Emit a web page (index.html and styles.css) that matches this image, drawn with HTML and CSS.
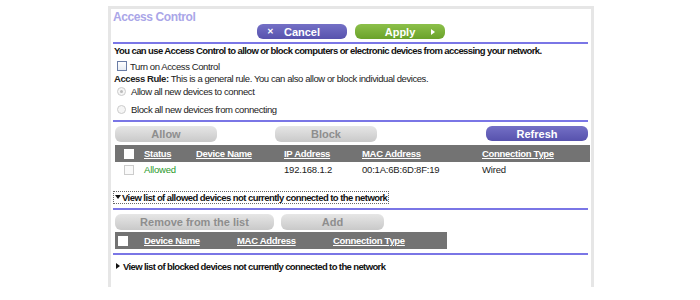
FILE: index.html
```html
<!DOCTYPE html>
<html lang="en">
<head>
  <meta charset="UTF-8" />
  <title>Access Control</title>
  <link rel="stylesheet" href="styles.css">
</head>
<body>
  <div class="frame">
    <div class="title">Access Control</div>
    <div class="top-buttons">
      <button class="btn btn-purple btn-top"><span class="x">&#x2715;</span>Cancel</button>
      <button class="btn btn-green btn-top">Apply<span class="tri"></span></button>
    </div>
    <div class="rule"></div>

    <p class="intro">You can use Access Control to allow or block computers or electronic devices from accessing your network.</p>
    <label class="line check-line"><span class="box"></span>Turn on Access Control</label>
    <p class="rule-text"><b>Access Rule:</b> This is a general rule. You can also allow or block individual devices.</p>
    <label class="line radio-line"><span class="radio checked"></span>Allow all new devices to connect</label>
    <label class="line radio-line second"><span class="radio"></span>Block all new devices from connecting</label>

    <div class="rule rule-mid"></div>

    <div class="btn-row">
      <button class="btn btn-gray w102">Allow</button>
      <button class="btn btn-gray w102 ml58">Block</button>
      <button class="btn btn-purple w102 right">Refresh</button>
    </div>

    <table class="grid grid-main">
      <colgroup>
        <col style="width:29px"><col style="width:52px"><col style="width:88px">
        <col style="width:78px"><col style="width:120px"><col>
      </colgroup>
      <thead>
        <tr>
          <th><span class="hbox"></span></th>
          <th>Status</th>
          <th>Device Name</th>
          <th>IP Address</th>
          <th>MAC Address</th>
          <th>Connection Type</th>
        </tr>
      </thead>
      <tbody>
        <tr>
          <td><span class="rbox"></span></td>
          <td class="ok">Allowed</td>
          <td></td>
          <td>192.168.1.2</td>
          <td>00:1A:6B:6D:8F:19</td>
          <td>Wired</td>
        </tr>
      </tbody>
    </table>

    <div class="toggle open"><span class="focus"><span class="arrow-down"></span>View list of allowed devices not currently connected to the network</span></div>

    <div class="rule"></div>

    <div class="btn-row short">
      <button class="btn btn-gray w159">Remove from the list</button>
      <button class="btn btn-gray w103 ml7">Add</button>
    </div>

    <table class="grid grid-small">
      <colgroup>
        <col style="width:29px"><col style="width:93px"><col style="width:96px"><col>
      </colgroup>
      <thead>
        <tr>
          <th class="left-box"><span class="hbox"></span></th>
          <th>Device Name</th>
          <th>MAC Address</th>
          <th>Connection Type</th>
        </tr>
      </thead>
    </table>

    <div class="rule rule-low"></div>

    <div class="toggle closed"><span class="arrow-right"></span>View list of blocked devices not currently connected to the network</div>
  </div>
</body>
</html>
```

FILE: styles.css
```css
* { margin: 0; padding: 0; box-sizing: border-box; }

html, body {
  background: #fff;
  font-family: "Liberation Sans", Arial, sans-serif;
  font-size: 10px;
  color: #111;
}

.frame {
  width: 486px;
  height: 281px;
  margin: 6px 0 0 108px;
  border: 3px solid #e6e6e6;
  border-bottom: none;
  padding: 0 2px 0 2px;
}

.title {
  height: 15px;
  padding-top: 1px;
  font-size: 12px;
  font-weight: bold;
  color: #aaa6e8;
  letter-spacing: -0.4px;
}

.top-buttons {
  display: flex;
  justify-content: center;
  gap: 8px;
  height: 18px;
}

.btn {
  font-family: "Liberation Sans", Arial, sans-serif;
  font-weight: bold;
  font-size: 11px;
  border: none;
  border-radius: 6px;
  height: 15px;
  display: flex;
  align-items: center;
  justify-content: center;
  position: relative;
}

.btn-top { width: 90px; height: 15px; }

.btn-purple {
  background: linear-gradient(#7470c6, #5752ad);
  color: #fff;
}

.btn-green {
  background: linear-gradient(#8cc04a, #6aa22a);
  color: #fff;
}

.btn-gray {
  background: linear-gradient(#e6e6e6, #c9c9c9);
  color: #8e8e8e;
  height: 16px;
}

.x {
  position: absolute;
  left: 10px;
  font-size: 8px;
}

.tri {
  position: absolute;
  right: 10px;
  top: 5px;
  border-left: 4px solid #fff;
  border-top: 3px solid transparent;
  border-bottom: 3px solid transparent;
}

.rule {
  height: 2px;
  background: #7a76e6;
  margin-right: 1px;
}

.intro {
  font-weight: bold;
  font-size: 9.5px;
  letter-spacing: -0.6px;
  margin-top: 1px;
  height: 12px;
  line-height: 12px;
  padding-left: 1px;
}

.line {
  display: flex;
  align-items: center;
  height: 12px;
  font-size: 9.5px;
  letter-spacing: -0.4px;
  color: #222;
}

.check-line { margin-top: 3px; }

.rule-text {
  height: 13px;
  line-height: 13px;
  font-size: 9.5px;
  letter-spacing: -0.42px;
  padding-left: 1px;
  color: #222;
}

.box {
  width: 10px;
  height: 10px;
  border: 1px solid #6a7da6;
  background: linear-gradient(#fff, #e7ecf3);
  margin: 0 3px 0 4px;
}

.radio-line { height: 13px; }
.radio-line.second { height: 18px; margin-top: 2px; }

.radio {
  width: 9px;
  height: 9px;
  border-radius: 50%;
  border: 1px solid #ccc;
  background: #f5f5f5;
  margin: 0 5px 0 4px;
  position: relative;
}

.radio.checked::after {
  content: "";
  position: absolute;
  left: 2px;
  top: 2px;
  width: 3px;
  height: 3px;
  border-radius: 50%;
  background: #bbb;
}

.rule-mid { margin-top: 2px; }

.btn-row {
  display: flex;
  margin-top: 4px;
  height: 19px;
  padding-left: 2px;
}

.btn-row.short { height: 18px; }

.w102 { width: 102px; }
.w159 { width: 159px; }
.w103 { width: 103px; }
.ml58 { margin-left: 58px; }
.ml7 { margin-left: 7px; }
.right { margin-left: auto; margin-right: 1px; }

.grid {
  border-collapse: collapse;
  table-layout: fixed;
  margin-left: 2px;
  font-size: 9.5px;
}

.grid-main { width: 475px; }
.grid-small { width: 332px; }

.grid th {
  background: #737373;
  color: #fff;
  height: 17px;
  text-align: left;
  text-decoration: underline;
  font-weight: bold;
  letter-spacing: -0.3px;
  padding: 0;
}

.grid td {
  height: 15px;
  padding: 0;
  letter-spacing: -0.2px;
  color: #222;
}

.grid td.ok { color: #2a9a2a; }

.hbox {
  display: block;
  width: 10px;
  height: 10px;
  background: #fff;
  margin-left: 9px;
}

.left-box .hbox { margin-left: 3px; }

.rbox {
  display: block;
  width: 10px;
  height: 10px;
  border: 1px solid #ccc;
  background: #fafafa;
  margin-left: 9px;
}

.toggle {
  font-weight: bold;
  font-size: 9.5px;
  letter-spacing: -0.56px;
}

.toggle.open {
  margin-top: 15px;
  height: 16px;
}

.focus {
  border: 1px dotted #666;
  padding-right: 1px;
}

.arrow-down {
  display: inline-block;
  vertical-align: middle;
  margin: 0 1px 2px 1px;
  border-top: 4px solid #111;
  border-left: 3px solid transparent;
  border-right: 3px solid transparent;
}

.arrow-right {
  display: inline-block;
  vertical-align: middle;
  margin: 0 3px 2px 3px;
  border-left: 4px solid #111;
  border-top: 3px solid transparent;
  border-bottom: 3px solid transparent;
}

.rule-low { margin-top: 4px; }

.toggle.closed {
  margin-top: 6px;
  letter-spacing: -0.62px;
}
```
